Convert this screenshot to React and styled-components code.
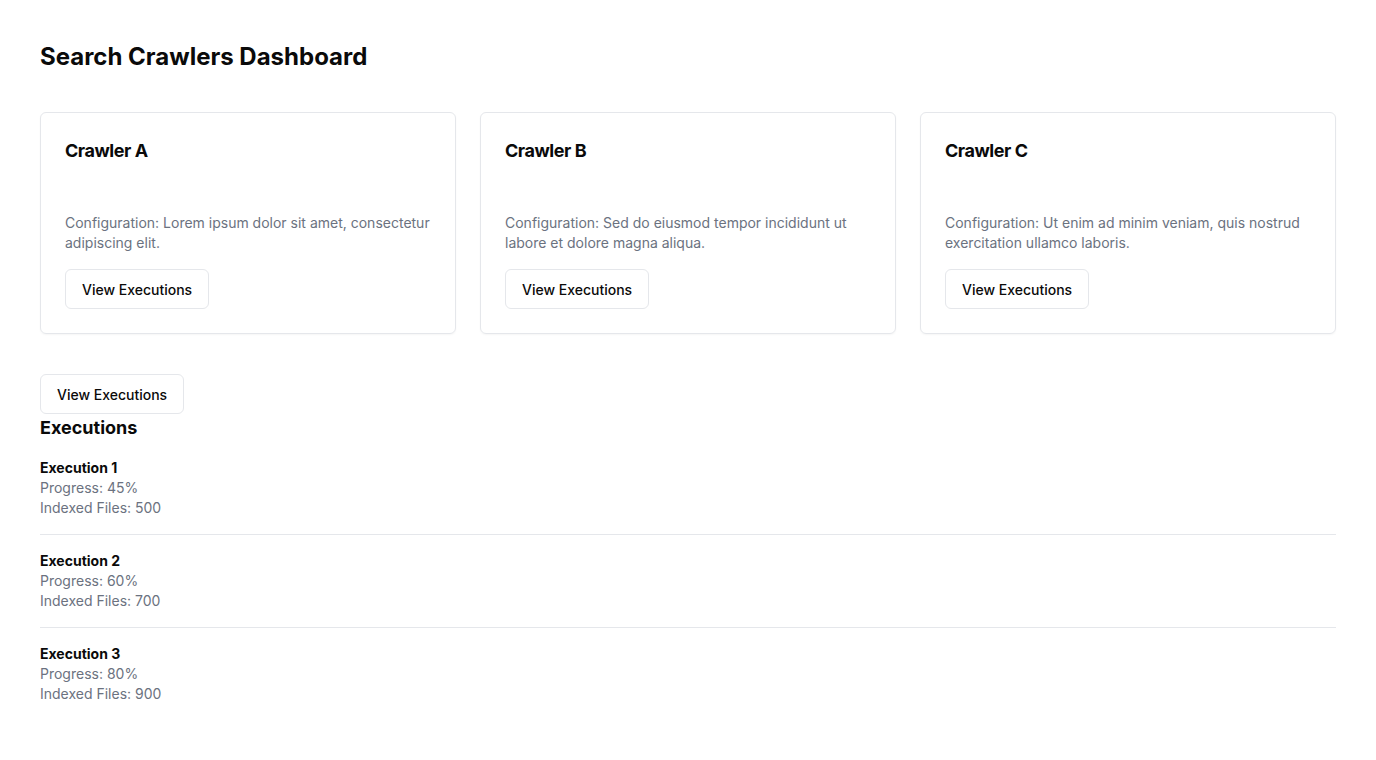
import React from 'react'
import styled, { createGlobalStyle } from 'styled-components'

const GlobalStyle = createGlobalStyle`
    * { box-sizing: border-box; }
    body {
        margin: 0;
        background: #ffffff;
        font-family: Inter, "Liberation Sans", sans-serif;
        color: #0a0a0a;
    }
`

const Page = styled.div`
    padding: 40px;
`

const Title = styled.h1`
    font-size: 24px;
    line-height: 32px;
    font-weight: 700;
    margin: 1px 0 39px;
`

const Grid = styled.div`
    display: grid;
    grid-template-columns: repeat(3, 1fr);
    gap: 24px;
    margin-bottom: 40px;
`

const Card = styled.div`
    border: 1px solid #e5e7eb;
    border-radius: 6px;
    padding: 24px;
    box-shadow: 0 1px 2px rgba(0, 0, 0, 0.04);
    display: flex;
    flex-direction: column;
    align-items: flex-start;
`

const CardTitle = styled.h3`
    font-size: 18px;
    line-height: 28px;
    font-weight: 700;
    letter-spacing: -0.025em;
    margin: 0 0 48px;
`

const Config = styled.p`
    font-size: 14px;
    line-height: 20px;
    color: #6b7280;
    margin: 0 0 16px;
`

const Button = styled.button`
    font-family: inherit;
    font-size: 14px;
    font-weight: 500;
    color: #0a0a0a;
    background: #ffffff;
    border: 1px solid #e5e7eb;
    border-radius: 6px;
    height: 40px;
    padding: 0 16px;
    cursor: pointer;
`

const SectionTitle = styled.h2`
    font-size: 18px;
    line-height: 28px;
    font-weight: 700;
    margin: 0;
`

const List = styled.div`
    display: flex;
    flex-direction: column;
`

const Item = styled.div`
    padding: 16px 0;
    border-bottom: ${({ $last }) => ($last ? 'none' : '1px solid #e5e7eb')};
`

const ItemName = styled.div`
    font-size: 14px;
    line-height: 20px;
    font-weight: 700;
`

const ItemMeta = styled.div`
    font-size: 14px;
    line-height: 20px;
    color: #6b7280;
`

const crawlers = [
    { name: 'Crawler A', config: 'Lorem ipsum dolor sit amet, consectetur adipiscing elit.' },
    { name: 'Crawler B', config: 'Sed do eiusmod tempor incididunt ut labore et dolore magna aliqua.' },
    { name: 'Crawler C', config: 'Ut enim ad minim veniam, quis nostrud exercitation ullamco laboris.' },
]

const executions = [
    { id: 1, progress: 45, files: 500 },
    { id: 2, progress: 60, files: 700 },
    { id: 3, progress: 80, files: 900 },
]

const App = () => (
    <Page>
        <GlobalStyle />
        <Title>Search Crawlers Dashboard</Title>
        <Grid>
            {crawlers.map(c => (
                <Card key={c.name}>
                    <CardTitle>{c.name}</CardTitle>
                    <Config>Configuration: {c.config}</Config>
                    <Button>View Executions</Button>
                </Card>
            ))}
        </Grid>
        <Button>View Executions</Button>
        <SectionTitle>Executions</SectionTitle>
        <List>
            {executions.map((e, i) => (
                <Item key={e.id} $last={i === executions.length - 1}>
                    <ItemName>Execution {e.id}</ItemName>
                    <ItemMeta>Progress: {e.progress}%</ItemMeta>
                    <ItemMeta>Indexed Files: {e.files}</ItemMeta>
                </Item>
            ))}
        </List>
    </Page>
)

export default App
